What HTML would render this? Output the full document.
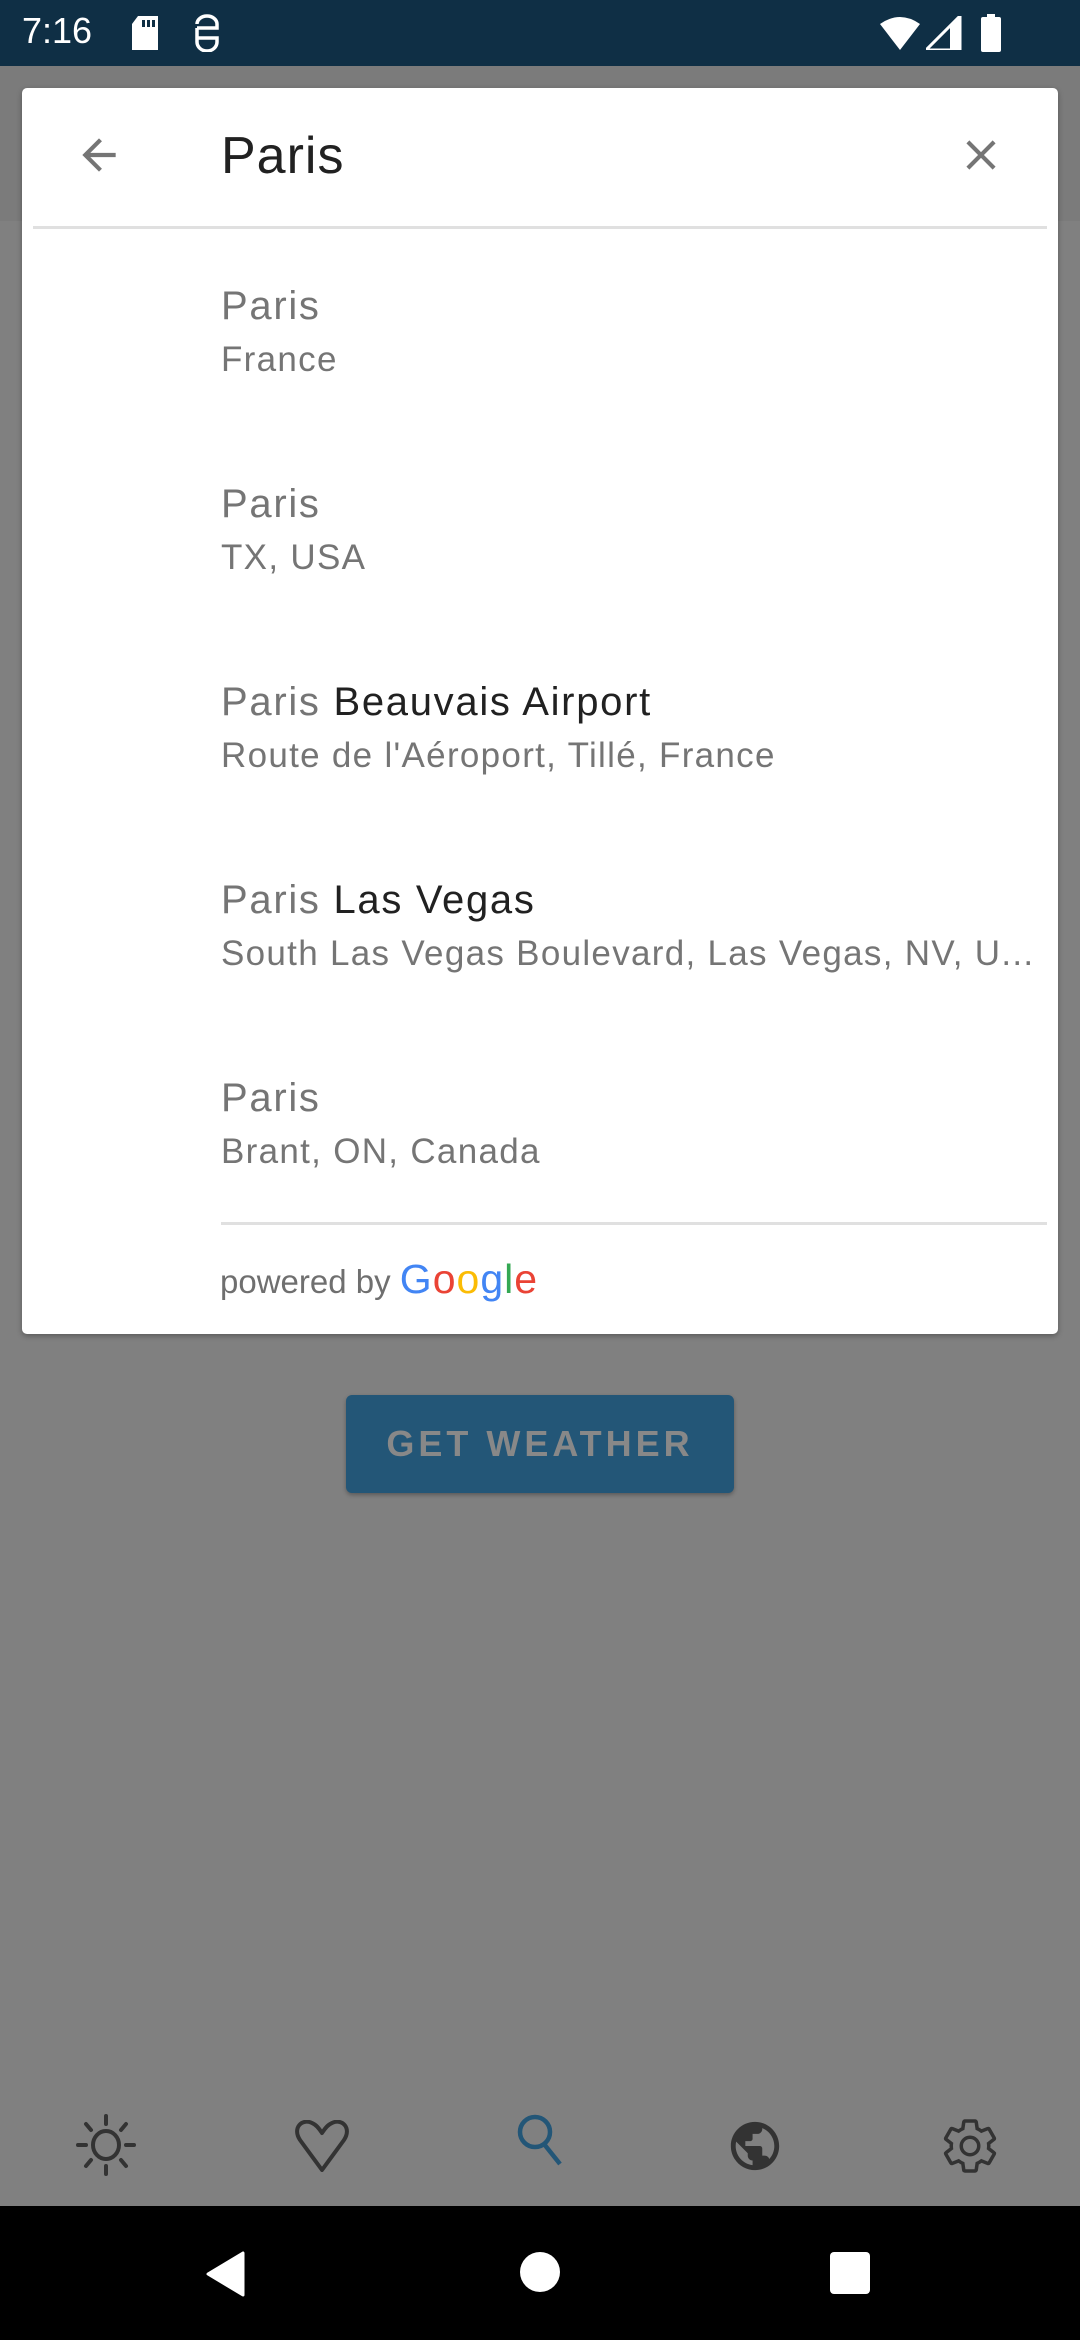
<!DOCTYPE html>
<html><head><meta charset="utf-8"><style>
*{margin:0;padding:0;box-sizing:border-box}
body{width:1080px;height:2340px;background:#808080;position:relative;overflow:hidden;font-family:"Liberation Sans",Roboto,sans-serif}
.sb{position:absolute;left:0;top:0;width:1080px;height:66px;background:#0f2f45;color:#fff}
.tb{position:absolute;left:0;top:66px;width:1080px;height:155px;background:#7b7b7b}
.card{position:absolute;left:22px;top:88px;width:1036px;height:1246px;background:#fff;border-radius:5px;box-shadow:0 2px 6px rgba(0,0,0,.3)}
.q{position:absolute;left:221px;top:126px;font-size:52px;color:#212121;letter-spacing:1px}
.div{position:absolute;left:33px;top:226px;width:1014px;height:3px;background:#e0e0e0}
.it{position:absolute;left:221px;white-space:nowrap}
.t{font-size:40px;color:#757575;line-height:48px;letter-spacing:1.7px}
.t b{font-weight:normal;color:#212121}
.s{font-size:35px;color:#757575;line-height:44px;margin-top:8px;letter-spacing:1.3px}
.btn{position:absolute;left:346px;top:1395px;width:388px;height:98px;background:#235677;border-radius:6px;color:#888;font-size:36px;font-weight:bold;letter-spacing:4px;text-align:center;line-height:98px;box-shadow:0 2px 4px rgba(0,0,0,.3)}
.nav{position:absolute;left:0;top:2206px;width:1080px;height:134px;background:#000}
svg{position:absolute}
</style></head><body>
<div class="sb">
<div style="position:absolute;left:22px;top:10px;font-size:36px">7:16</div>
<svg style="left:130px;top:16px" width="30" height="36" viewBox="0 0 30 36"><path d="M8 0H28V34H2V8Z" fill="#fff"/><rect x="12" y="4" width="3" height="7" fill="#0f2f45"/><rect x="17" y="4" width="3" height="7" fill="#0f2f45"/><rect x="22" y="4" width="3" height="7" fill="#0f2f45"/></svg>
<svg style="left:192px;top:14px" width="30" height="38" viewBox="0 0 30 38"><path d="M5 14V28a10 9 0 0 0 20 0V24H5M5 14h20V10a10 8 0 0 0-20 0" fill="none" stroke="#fff" stroke-width="3.5"/></svg>
<svg style="left:880px;top:16px" width="40" height="34" viewBox="0 0 40 34"><path d="M0 8Q20-6 40 8L20 34Z" fill="#fff"/></svg>
<svg style="left:926px;top:16px" width="36" height="34" viewBox="0 0 36 34"><path d="M34 0V34H0Z" fill="none" stroke="#fff" stroke-width="3"/><path d="M24 10V34H34V0Z" fill="#fff"/></svg>
<svg style="left:980px;top:14px" width="22" height="38" viewBox="0 0 22 38"><rect x="7" y="0" width="8" height="4" fill="#fff"/><rect x="1" y="3" width="20" height="35" rx="2" fill="#fff"/></svg>
</div>
<div class="tb"></div>
<div class="card"></div>
<svg style="left:74px;top:130px" width="50" height="50" viewBox="0 0 24 24"><path d="M20 11H7.83l5.59-5.59L12 4l-8 8 8 8 1.41-1.41L7.83 13H20z" fill="#757575"/></svg>
<div class="q">Paris</div>
<svg style="left:956px;top:130px" width="50" height="50" viewBox="0 0 24 24"><path d="M19 6.41L17.59 5 12 10.59 6.41 5 5 6.41 10.59 12 5 17.59 6.41 19 12 13.41 17.59 19 19 17.59 13.41 12z" fill="#757575"/></svg>
<div class="div"></div>
<div class="it" style="top:282px"><div class="t">Paris</div><div class="s">France</div></div>
<div class="it" style="top:480px"><div class="t">Paris</div><div class="s">TX, USA</div></div>
<div class="it" style="top:678px"><div class="t">Paris <b>Beauvais Airport</b></div><div class="s">Route de l'Aéroport, Tillé, France</div></div>
<div class="it" style="top:876px"><div class="t">Paris <b>Las Vegas</b></div><div class="s">South Las Vegas Boulevard, Las Vegas, NV, U...</div></div>
<div class="it" style="top:1074px"><div class="t">Paris</div><div class="s">Brant, ON, Canada</div></div>
<div style="position:absolute;left:221px;top:1222px;width:826px;height:3px;background:#e0e0e0"></div>
<div style="position:absolute;left:220px;top:1256px;font-size:33px;color:#6f6f6f;white-space:nowrap">powered by <span style="font-size:41px;letter-spacing:1px"><span style="color:#4285f4">G</span><span style="color:#ea4335">o</span><span style="color:#fbbc05">o</span><span style="color:#4285f4">g</span><span style="color:#34a853">l</span><span style="color:#ea4335">e</span></span></div>
<div class="btn">GET WEATHER</div>
<svg style="left:76px;top:2114px" width="60" height="62" viewBox="0 0 60 62" fill="none" stroke="#333" stroke-width="4" stroke-linecap="round"><ellipse cx="30" cy="31" rx="13" ry="14"/><path d="M30 2v8M30 52v8M2 31h8M50 31h8M10 10l5 6M50 10l-5 6M10 52l5-6M50 52l-5-6"/></svg>
<svg style="left:294px;top:2120px" width="56" height="52" viewBox="0 0 56 52" fill="none" stroke="#333" stroke-width="4" stroke-linejoin="round"><path d="M28 50L6 20C-2 8 8-2 18 3c5 2 8 7 10 10 2-3 5-8 10-10 10-5 20 5 12 17Z"/></svg>
<svg style="left:512px;top:2112px" width="56" height="56" viewBox="0 0 56 56" fill="none" stroke="#235677" stroke-width="4.5"><circle cx="23" cy="20" r="15"/><path d="M32 32l16 20"/></svg>
<svg style="left:726px;top:2117px" width="58" height="58" viewBox="0 0 24 24"><path d="M12 2C6.48 2 2 6.48 2 12s4.48 10 10 10 10-4.48 10-10S17.520 2 12 2zm-1 17.930c-3.950-.49-7-3.850-7-7.930 0-.62.08-1.210.21-1.790L9 15v1c0 1.100.9 2 2 2v1.930zm6.900-2.540c-.26-.81-1-1.390-1.900-1.390h-1v-3c0-.55-.45-1-1-1H8v-2h2c.55 0 1-.45 1-1V7h2c1.100 0 2-.9 2-2v-.41c2.930 1.190 5 4.060 5 7.410 0 2.080-.8 3.970-2.100 5.390z" fill="#333"/></svg>
<svg style="left:940px;top:2116px" width="60" height="60" viewBox="0 0 24 24"><path d="M19.43 12.98c.04-.32.07-.64.07-.98s-.03-.66-.07-.98l2.11-1.65c.19-.15.24-.42.12-.64l-2-3.46c-.12-.22-.39-.3-.61-.22l-2.49 1c-.52-.4-1.08-.73-1.69-.98l-.38-2.65C14.46 2.18 14.25 2 14 2h-4c-.25 0-.46.18-.49.42l-.38 2.65c-.61.25-1.17.59-1.690.98l-2.49-1c-.23-.09-.49 0-.61.22l-2 3.46c-.13.22-.07.49.12.64l2.11 1.65c-.04.32-.07.65-.07.98s.03.66.07.98l-2.11 1.65c-.19.15-.24.42-.12.64l2 3.46c.12.22.39.3.61.22l2.49-1c.52.4 1.080.73 1.690.98l.38 2.65c.03.24.24.42.49.42h4c.25 0 .46-.18.49-.42l.38-2.65c.61-.25 1.17-.59 1.69-.98l2.49 1c.23.09.49 0 .61-.22l2-3.46c.12-.22.07-.49-.12-.64l-2.11-1.65zM12 15.5c-1.93 0-3.5-1.57-3.5-3.5s1.57-3.5 3.5-3.5 3.5 1.57 3.5 3.5-1.57 3.5-3.5 3.5z" fill="none" stroke="#333" stroke-width="1.4"/></svg>
<div class="nav">
<svg style="left:205px;top:45px" width="40" height="46" viewBox="0 0 40 46"><path d="M38 2V44L3 23Z" fill="#fff" stroke="#fff" stroke-width="3" stroke-linejoin="round"/></svg>
<div style="position:absolute;left:520px;top:46px;width:40px;height:40px;border-radius:50%;background:#fff"></div>
<div style="position:absolute;left:830px;top:46px;width:40px;height:42px;border-radius:4px;background:#fff"></div>
</div>
</body></html>
